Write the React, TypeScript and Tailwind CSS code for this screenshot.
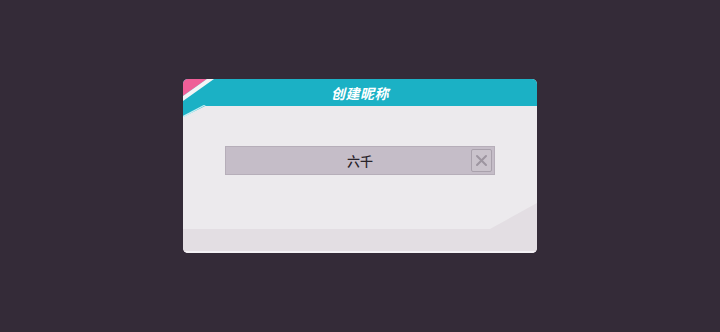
import React from "react";

export default function App() {
  return (
    <div className="w-[720px] h-[332px] bg-[#342b38] flex items-center justify-center overflow-hidden" style={{ fontFamily: '"Noto Sans CJK SC", "Noto Sans", sans-serif' }}>
      <div className="relative w-[354px] h-[174px] rounded-[5px] overflow-hidden bg-[#eceaed] flex flex-col">
        {/* header */}
        <div className="relative h-[27px] bg-[#1bb1c5] flex items-center justify-center">
          <span className="text-white text-[14px] font-bold italic leading-none tracking-[0.5px]">创建昵称</span>
        </div>
        {/* header slant on left */}
        <div className="absolute left-0 top-[27px] w-[22px] h-[11px] bg-[#1bb1c5] [clip-path:polygon(0_0,100%_0,0_100%)]" />
        <div className="absolute left-0 top-[26px] w-[23px] h-[12px] bg-[#c4eff4] [clip-path:polygon(90%_0,100%_0,5%_100%,0_100%,0_90%)]" />
        {/* pink corner */}
        <div className="absolute left-0 top-0 w-[24px] h-[17px] bg-[#ef5f98] [clip-path:polygon(0_0,100%_0,0_100%)]" />
        <div className="absolute left-0 top-0 w-[31px] h-[22px] bg-[#f4f4f6] [clip-path:polygon(77%_0,100%_0,0_100%,0_77%)]" />

        {/* body */}
        <div className="flex-1 flex justify-center pt-[40px]">
          <div className="relative w-[270px] h-[29px] bg-[#c5bdc8] border border-[#b6aeb9] flex items-center justify-center">
            <span className="text-[13px] text-[#2a252c] leading-none font-medium">六千</span>
            <div className="absolute right-[2px] top-[2px] w-[21px] h-[23px] border border-[#a9a1ac] bg-[#cac3cc] rounded-[2px] flex items-center justify-center">
              <svg width="13" height="13" viewBox="0 0 13 13">
                <path d="M2 2L11 11M11 2L2 11" stroke="#9d95a0" strokeWidth="2" strokeLinecap="round" />
              </svg>
            </div>
          </div>
        </div>

        {/* bottom band */}
        <div className="h-[24px] bg-[#e3dee3] border-b-2 border-[#f3f1f4]" />
        <div className="absolute right-0 bottom-[24px] w-[47px] h-[26px] bg-[#e3dee3] [clip-path:polygon(100%_0,100%_100%,0_100%)]" />
      </div>
    </div>
  );
}
